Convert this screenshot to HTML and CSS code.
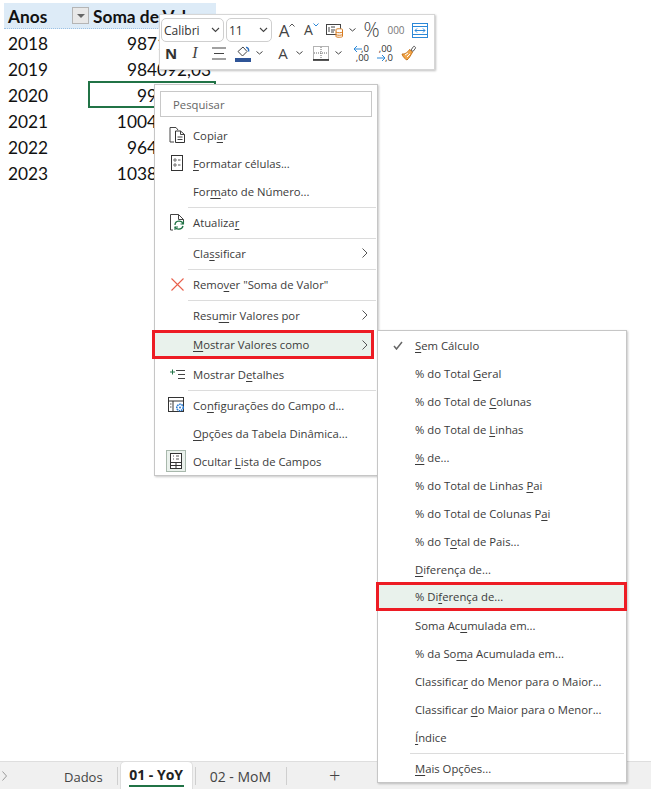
FILE: index.html
```html
<!DOCTYPE html>
<html lang="pt">
<head>
<meta charset="utf-8">
<title>Mostrar Valores como</title>
<link rel="stylesheet" href="styles.css">
</head>
<body>
<div class="app">
  <main class="sheet">
    <div class="pivot">
      <div class="row head"><div class="c-a">Anos</div><div class="c-f"><span class="filter"><svg width="8" height="4" viewBox="0 0 8 4"><path d="M0 0h8L4 4z" fill="#666"/></svg></span></div><div class="c-b">Soma de Valor</div></div>
      <div class="row"><div class="c-a">2018</div><div class="c-n">987104,21</div></div>
      <div class="row"><div class="c-a">2019</div><div class="c-n">984092,03</div></div>
      <div class="row"><div class="c-a">2020</div><div class="c-n sel">99218,40</div></div>
      <div class="row"><div class="c-a">2021</div><div class="c-n">1004871,66</div></div>
      <div class="row"><div class="c-a">2022</div><div class="c-n">964350,18</div></div>
      <div class="row"><div class="c-a">2023</div><div class="c-n">1038422,75</div></div>
    </div>

    <div class="mini">
      <div class="mini-row first">
        <div class="combo font-combo"><span>Calibri</span><svg class="chev" width="9" height="6" viewBox="0 0 9 6"><path d="M1 1l3.500 3.500L8 1" fill="none" stroke="#444" stroke-width="1.100"/></svg></div>
        <div class="combo size-combo"><span>11</span><svg class="chev" width="9" height="6" viewBox="0 0 9 6"><path d="M1 1l3.500 3.500L8 1" fill="none" stroke="#444" stroke-width="1.100"/></svg></div>
        <div class="tool t-grow"><span class="big-a">A</span><svg class="caret" width="6" height="4" viewBox="0 0 6 4"><path d="M.5 3.500L3 1l2.500 2.500" fill="none" stroke="#555"/></svg></div>
        <div class="tool t-shrink"><span class="mid-a">A</span><svg class="caret" width="6" height="4" viewBox="0 0 6 4"><path d="M.5.5L3 3 5.500.5" fill="none" stroke="#2b88d8"/></svg></div>
        <div class="tool t-cond"><svg width="17" height="16" viewBox="0 0 17 16"><rect x=".5" y="2.500" width="14" height="10" fill="#fff" stroke="#444"/><path d="M3 5v5M5 5h4M5 8h4M5 10h3" stroke="#444" fill="none"/><path d="M10 7.500c0-1 6.500-1 6.500 0v7c0 1-6.500 1-6.500 0z" fill="#fff" stroke="#d67a1f"/><path d="M10 10c1 1 5.500 1 6.500 0M10 12.500c1 1 5.500 1 6.500 0" fill="none" stroke="#d67a1f"/></svg></div>
        <svg class="small-chev" width="7" height="4" viewBox="0 0 7 4"><path d="M.5.5L3.500 3 6.500.5" fill="none" stroke="#444"/></svg>
        <div class="tool t-pct">%</div>
        <div class="tool t-000">000</div>
        <div class="tool t-wrap"><svg width="16" height="15" viewBox="0 0 16 15"><rect x=".5" y=".5" width="15" height="14" fill="#fff" stroke="#2b88d8"/><path d="M.5 3.500h15M.5 11.500h15" stroke="#2b88d8"/><path d="M3 7.500h10M5 5.500l-2 2 2 2M11 5.500l2 2-2 2" fill="none" stroke="#2b88d8"/></svg></div>
      </div>
      <div class="mini-row">
        <div class="tool t-n">N</div>
        <div class="tool t-i">I</div>
        <div class="tool t-align"><svg width="14" height="13" viewBox="0 0 14 13"><path d="M0 1h14M2 6.500h10M0 12h14" stroke="#444" stroke-width="1.200" fill="none"/></svg></div>
        <div class="tool t-fill"><svg width="16" height="17" viewBox="0 0 16 17"><path d="M3 6.500L8 2l4 4.500-4.500 4.500z" fill="#fff" stroke="#444"/><path d="M11 2.500c2-.5 3 2 2.500 4" fill="none" stroke="#2b6fc0" stroke-width="1.500"/><rect y="13" width="16" height="4" fill="#2f5597"/></svg></div>
        <svg class="small-chev" width="7" height="4" viewBox="0 0 7 4"><path d="M.5.5L3.500 3 6.500.5" fill="none" stroke="#444"/></svg>
        <div class="tool t-a">A</div>
        <svg class="small-chev" width="7" height="4" viewBox="0 0 7 4"><path d="M.5.5L3.500 3 6.500.5" fill="none" stroke="#444"/></svg>
        <div class="tool t-border"><svg width="16" height="15" viewBox="0 0 16 15"><rect x=".5" y=".5" width="15" height="13" fill="none" stroke="#666" stroke-dasharray="1 1"/><path d="M8 1v12M1 7h14" stroke="#666" stroke-dasharray="1 1"/><path d="M0 14h16" stroke="#111" stroke-width="1.400"/></svg></div>
        <svg class="small-chev" width="7" height="4" viewBox="0 0 7 4"><path d="M.5.5L3.500 3 6.500.5" fill="none" stroke="#444"/></svg>
        <div class="tool t-dec dec1"><svg class="dec-arrow" width="9" height="8" viewBox="0 0 9 8"><path d="M9 4H1M4 1L1 4l3 3" fill="none" stroke="#2b88d8"/></svg><span class="dec-a">,0</span><span class="dec-b">,00</span></div>
        <div class="tool t-dec dec2"><span class="dec-c">,00</span><svg class="dec-arrow2" width="9" height="8" viewBox="0 0 9 8"><path d="M0 4h8M5 1l3 3-3 3" fill="none" stroke="#2b88d8"/></svg><span class="dec-d">,0</span></div>
        <div class="tool t-brush"><svg width="17" height="16" viewBox="0 0 17 16"><path d="M10 5l2.500-3.500c.6-.8 2.500.8 2 1.600L12 6.500z" fill="#fff" stroke="#555"/><path d="M1 9c3 .5 6-2 7.500-4.500l3 2.500C10 10 8 13.500 6 15 4 14 2 12 1 9z" fill="#f2a74b" stroke="#c8741a"/><path d="M4 10l3-2M6 12l3-3" stroke="#fff"/></svg></div>
      </div>
    </div>

    <nav class="menu main-menu">
      <div class="search">Pesquisar</div>
      <div class="item"><span class="ico"><svg width="17" height="16" viewBox="0 0 17 16"><path d="M5 15H1V.5h6l2 2.500" fill="none" stroke="#444"/><path d="M6.500 4h5l4 3.500v8h-9z" fill="#fff" stroke="#333"/><path d="M11.500 4v3.500h4M8.500 10h5M8.500 12.500h5" fill="none" stroke="#444"/></svg></span><span>Copi<u>a</u>r</span></div>
      <div class="item"><span class="ico"><svg width="12" height="16" viewBox="0 0 12 16"><rect x=".5" y=".5" width="11" height="15" fill="#fff" stroke="#333"/><path d="M3 4h2v2H3zM3 9h2v2H3z" fill="none" stroke="#555" stroke-width=".8"/><path d="M7 5h2.500M7 10h2.500" stroke="#555"/></svg></span><span><u>F</u>ormatar células...</span></div>
      <div class="item"><span class="ico"></span><span>For<u>m</u>ato de Número...</span></div>
      <hr class="sep">
      <div class="item"><span class="ico"><svg width="15" height="17" viewBox="0 0 15 17"><path d="M3 16H.5V.5h8l5 5V7" fill="none" stroke="#444"/><path d="M8.500.5v5h5" fill="none" stroke="#444"/><path d="M5 11c0-5 7-5 8-1M13 12c-1 4-7 4-8 1" fill="none" stroke="#217346" stroke-width="1.300"/><path d="M13.500 7v3h-3M5 16v-3h3" fill="none" stroke="#217346" stroke-width="1.100"/></svg></span><span>Atualiza<u>r</u></span></div>
      <hr class="sep">
      <div class="item has-sub"><span class="ico"></span><span>Cla<u>s</u>sificar</span><svg class="arrow" width="6" height="10" viewBox="0 0 6 10"><path d="M.5.5L5 5 .5 9.500" fill="none" stroke="#555"/></svg></div>
      <hr class="sep">
      <div class="item"><span class="ico"><svg width="13" height="13" viewBox="0 0 13 13"><path d="M.5.500l12 12M12.500.500l-12 12" stroke="#e8604c" stroke-width="1.100"/></svg></span><span>Remo<u>v</u>er "Soma de Valor"</span></div>
      <hr class="sep">
      <div class="item has-sub"><span class="ico"></span><span>Resu<u>m</u>ir Valores por</span><svg class="arrow" width="6" height="10" viewBox="0 0 6 10"><path d="M.5.5L5 5 .5 9.500" fill="none" stroke="#555"/></svg></div>
      <div class="item has-sub hot"><span class="ico"></span><span><u>M</u>ostrar Valores como</span><svg class="arrow" width="6" height="10" viewBox="0 0 6 10"><path d="M.5.5L5 5 .5 9.500" fill="none" stroke="#555"/></svg></div>
      <div class="item"><span class="ico"><svg width="15" height="11" viewBox="0 0 15 11"><path d="M0 3h5M2.500.5v5" stroke="#217346"/><path d="M6 1.500h9M8 5.500h7M8 9.500h7" stroke="#444"/></svg></span><span>Mostrar D<u>e</u>talhes</span></div>
      <hr class="sep">
      <div class="item"><span class="ico"><svg width="18" height="16" viewBox="0 0 18 16"><rect x=".5" y=".5" width="15" height="14" fill="#fff" stroke="#333"/><path d="M.5 4h15M5 4v10" stroke="#333"/><path d="M2 7h1.500M2 10h1.500" stroke="#555"/><circle cx="12" cy="10.500" r="3.200" fill="#fff" stroke="#2b7cd3" stroke-width="1.600" stroke-dasharray="1.600 .7"/><circle cx="12" cy="10.500" r="1" fill="#2b7cd3"/></svg></span><span>Co<u>n</u>figurações do Campo d...</span></div>
      <div class="item"><span class="ico"></span><span><u>O</u>pções da Tabela Dinâmica...</span></div>
      <div class="item"><span class="ico boxed"><svg width="12" height="16" viewBox="0 0 12 16"><rect x=".5" y=".5" width="11" height="15" fill="#fff" stroke="#333"/><path d="M.5 9.500h11M.5 12.500h11M6 9.500v6" stroke="#333"/><path d="M3 3h1M3 6h1M6 3h3M6 6h3" stroke="#555"/></svg></span><span>Ocultar <u>L</u>ista de Campos</span></div>
    </nav>

    <nav class="menu sub-menu">
      <div class="item"><span class="ico"><svg width="10" height="9" viewBox="0 0 10 9"><path d="M1 5l2.500 3L9 1" fill="none" stroke="#666" stroke-width="1.500"/></svg></span><span><u>S</u>em Cálculo</span></div>
      <div class="item"><span class="ico"></span><span>% do Total <u>G</u>eral</span></div>
      <div class="item"><span class="ico"></span><span>% do Total de <u>C</u>olunas</span></div>
      <div class="item"><span class="ico"></span><span>% do Total de <u>L</u>inhas</span></div>
      <div class="item"><span class="ico"></span><span><u>%</u> de...</span></div>
      <div class="item"><span class="ico"></span><span>% do Total de Linhas <u>P</u>ai</span></div>
      <div class="item"><span class="ico"></span><span>% do Total de Colunas P<u>a</u>i</span></div>
      <div class="item"><span class="ico"></span><span>% do T<u>o</u>tal de Pais...</span></div>
      <div class="item"><span class="ico"></span><span><u>D</u>iferença de...</span></div>
      <div class="item hot"><span class="ico"></span><span>% Di<u>f</u>erença de...</span></div>
      <div class="item"><span class="ico"></span><span>Soma Ac<u>u</u>mulada em...</span></div>
      <div class="item"><span class="ico"></span><span>% da So<u>m</u>a Acumulada em...</span></div>
      <div class="item"><span class="ico"></span><span>Classifica<u>r</u> do Menor para o Maior...</span></div>
      <div class="item"><span class="ico"></span><span>Classificar <u>d</u>o Maior para o Menor...</span></div>
      <div class="item"><span class="ico"></span><span><u>Í</u>ndice</span></div>
      <hr class="sep">
      <div class="item"><span class="ico"></span><span><u>M</u>ais Opções...</span></div>
    </nav>
  </main>

  <footer class="tabs">
    <svg class="tab-next" width="5" height="10" viewBox="0 0 5 10"><path d="M.5.5L4.500 5 .5 9.500" fill="none" stroke="#999"/></svg>
    <div class="tab t-dados">Dados</div>
    <div class="tab-div"></div>
    <div class="tab active"><span class="tab-label">01 - YoY</span></div>
    <div class="tab-div"></div>
    <div class="tab t-mom">02 - MoM</div>
    <div class="tab-div"></div>
    <div class="tab-add">+</div>
  </footer>
</div>
</body>
</html>
```
FILE: styles.css
```css
* { box-sizing: border-box; }
html, body { margin: 0; padding: 0; background: #fff; }
.app { width: 651px; height: 789px; display: flex; flex-direction: column; overflow: hidden; }
.sheet { position: relative; flex: 1; background: #fff; padding: 3px 0 0 4px; font-family: "Lato", "Liberation Sans", sans-serif; color: #111; }

.pivot { display: flex; flex-direction: column; width: 212px; font-size: 17.3px; }
.row { display: flex; height: 26px; align-items: center; }
.row.head { background: #ddebf7; border-bottom: 1px dotted #9cc2e5; font-weight: 700; }
.c-a { width: 84px; padding: 2px 0 0 4px; }
.head .c-a { width: 68px; }
.c-f { width: 17px; display: flex; }
.filter { width: 17px; height: 17px; background: #e8e8e8; border: 1px solid #b5b5b5; display: flex; align-items: center; justify-content: center; }
.c-b { white-space: nowrap; padding: 2px 0 0 4px; }
.c-n { flex: 1; height: 100%; padding: 2px 5px 0 0; display: flex; align-items: center; justify-content: flex-end; }
.c-n.sel { height: 27px; align-self: flex-start; outline: 2px solid #217346; outline-offset: -2px; }

/* Mini toolbar */
.mini { position: absolute; left: 159px; top: 14px; width: 276px; height: 56px; background: #fff; border: 1px solid #d6d6d6; box-shadow: 1px 1px 2px rgba(0,0,0,.25); padding: 3px 2px 3px 1px; display: flex; flex-direction: column; font-family: "Open Sans", sans-serif; color: #444; z-index: 3; }
.mini-row { display: flex; align-items: center; height: 22px; }
.mini-row.first { height: 24px; }
.combo { height: 24px; border: 1px solid #cfcfcf; border-radius: 5px; display: flex; align-items: center; justify-content: space-between; padding: 0 3px 0 2px; font-size: 12px; color: #333; }
.font-combo { width: 63px; margin-right: 2px; }
.size-combo { width: 46px; margin-right: 6px; }
.tool { display: flex; align-items: center; justify-content: center; position: relative; }
.t-grow { width: 18px; margin-right: 7px; }
.big-a { font-size: 17px; line-height: 1; color: #444; }
.caret { margin: -10px 0 0 0; }
.t-shrink { width: 17px; margin-right: 6px; }
.mid-a { font-size: 14px; line-height: 1; color: #444; }
.t-cond { width: 17px; margin-right: 6px; }
.small-chev { flex: none; }
.t-pct { width: 17px; margin-left: 7px; font-size: 20px; font-weight: 300; line-height: 1; color: #444; }
.t-000 { width: 18px; margin-left: 7px; font-size: 10px; color: #777; }
.t-wrap { width: 16px; margin-left: 7px; }
.t-n { width: 12px; margin-left: 4px; font-weight: 700; font-size: 15px; color: #333; }
.t-i { width: 10px; margin-left: 13px; font-family: "Liberation Serif", serif; font-style: italic; font-size: 16px; }
.t-align { width: 14px; margin-left: 12px; }
.t-fill { width: 16px; margin-left: 9px; margin-right: 5px; }
.t-a { width: 12px; margin-left: 14px; margin-right: 7px; font-size: 15px; }
.t-border { width: 16px; margin-left: 10px; margin-right: 6px; }
.t-dec { width: 16px; height: 19px; margin-left: 11px; font-size: 9.5px; color: #333; line-height: 1; }
.dec1 { margin-left: 11px; }
.dec2 { margin-left: 8px; }
.dec-arrow { position: absolute; left: 0; top: 1px; }
.dec-a { position: absolute; right: 0; top: 0; }
.dec-b { position: absolute; right: 0; bottom: 0; }
.dec-c { position: absolute; right: 1px; top: 0; }
.dec-arrow2 { position: absolute; left: 0; bottom: 1px; }
.dec-d { position: absolute; right: 0; bottom: 0; }
.t-brush { width: 17px; margin-left: 8px; }

/* Context menus */
.menu { position: absolute; background: #fff; border: 1px solid #c6c6c6; box-shadow: 1px 1px 2px rgba(0,0,0,.22); font-family: "Open Sans", sans-serif; font-size: 11.3px; color: #3b3b3b; z-index: 2; }
.main-menu { left: 154px; top: 84px; width: 224px; padding: 6px 0 0; }
.sub-menu { left: 377px; top: 330px; width: 250px; z-index: 4; padding: 0; }
.search { height: 26px; margin: 0 5px 4px 5px; border: 1px solid #c8c8c8; padding-left: 12px; display: flex; align-items: center; color: #666; }
.item { height: 28px; display: flex; align-items: center; white-space: nowrap; position: relative; }
.item u { text-underline-offset: 2px; text-decoration-thickness: 1px; }
.ico { width: 38px; flex: none; display: flex; align-items: center; justify-content: center; height: 22px; margin-left: 3px; margin-right: -3px; }
.sub-menu .ico { width: 37px; margin-left: 0; margin-right: 0; justify-content: flex-start; padding-left: 15px; }
.ico.boxed { width: 20px; margin: 0 7px 0 11px; background: #eaf1ec; border: 1px solid #a8b8ac; }
.sep { height: 1px; margin: 2px 1px 0 33px; border: 0; background: #dcdcdc; }
.sub-menu .sep { margin: 2px 2px 0 32px; }
.has-sub .arrow { position: absolute; right: 9px; }
.item.hot { background: #e9f2ec; border: 3px solid #ed1c24; }
.main-menu .hot { height: 29px; margin: 1px 3px 1px -3px; }
.main-menu .hot .ico { width: 38px; margin: 0; }
.main-menu .hot .arrow { right: 3px; }
.sub-menu .hot { height: 29px; margin: -1px -1px 0 -2px; }
.sub-menu .hot .ico { width: 36px; }

/* Tabs */
.tabs { height: 28px; background: #f0f0f0; border-top: 1px solid #dedede; display: flex; align-items: center; font-family: "Open Sans", sans-serif; font-size: 13px; color: #444; position: relative; }
.tab-next { margin-left: 2px; }
.tab { display: flex; align-items: center; height: 100%; }
.t-dados { margin-left: 57px; padding-top: 2px; }
.tab-div { width: 1px; height: 18px; background: #cfcfcf; }
.t-dados + .tab-div { margin-left: 14px; }
.active { background: #fff; width: 73px; margin: -1px 2px 0 2px; height: 29px; border-radius: 5px 5px 0 0; border: 1px solid #dedede; border-bottom: 0; padding: 0 8px; font-weight: 700; font-size: 14px; color: #222; }
.tab-label { display: flex; align-items: center; width: 100%; justify-content: center; border-bottom: 2px solid #217346; height: 24px; margin-top: -1px; white-space: nowrap; }
.t-mom { margin-left: 14px; padding-top: 2px; font-size: 14px; }
.t-mom + .tab-div { margin-left: 15px; }
.tab-add { margin-left: 42px; font-size: 20px; font-weight: 300; color: #444; line-height: 1; }
```
